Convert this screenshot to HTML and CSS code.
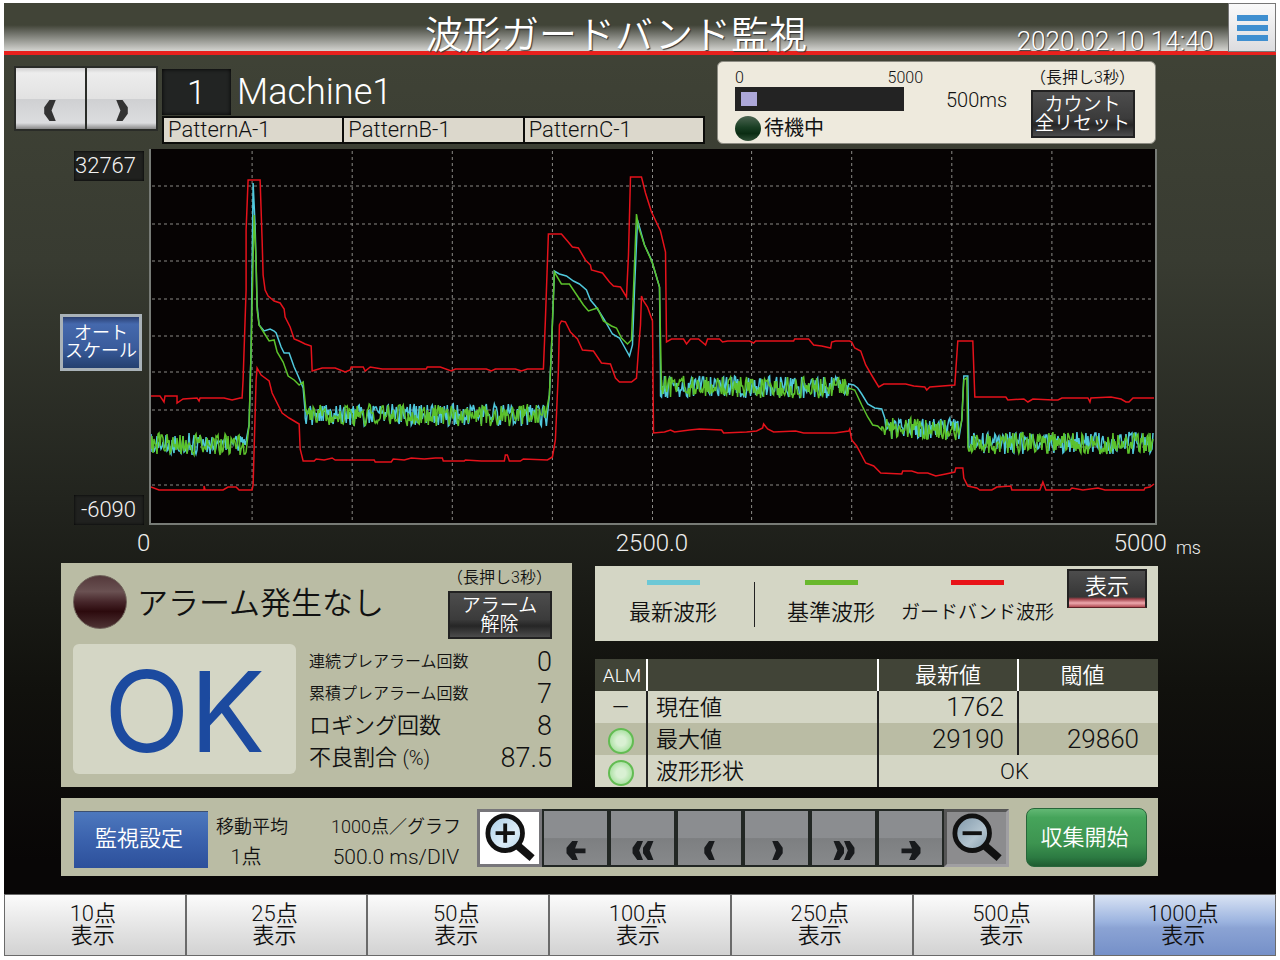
FILE: index.html
```
<!DOCTYPE html>
<html lang="ja">
<head>
  <meta charset="UTF-8"/>
  <meta content="width=device-width, initial-scale=1" name="viewport"/>
  <title>波形ガードバンド監視</title>
  <link rel="stylesheet" href="styles.css">
</head>
<body>
  <!-- shared icons -->
  <svg class="sprite" width="0" height="0">
    <symbol id="left" viewBox="0 0 12 20"><path d="M5 0H11L7 10L11 20H5L0 13V7Z"/></symbol>
    <symbol id="right" viewBox="0 0 12 20"><path d="M7 0H1L5 10L1 20H7L12 13V7Z"/></symbol>
    <symbol id="left2" viewBox="0 0 24 20"><path d="M6 0H12L8 10L12 20H6L1 13V7Z M17 0H23L19 10L23 20H17L12 13V7Z"/></symbol>
    <symbol id="right2" viewBox="0 0 24 20"><path d="M7 0H1L5 10L1 20H7L12 13V7Z M18 0H12L16 10L12 20H18L23 13V7Z"/></symbol>
    <symbol id="first" viewBox="0 0 20 20"><path d="M6 0H12L9 8H20V13H9L12 20H6L0 13V7Z"/></symbol>
    <symbol id="last" viewBox="0 0 20 20"><path d="M14 0H8L11 8H0V13H11L8 20H14L20 13V7Z"/></symbol>
  </svg>

  <div class="screen">
    <header class="header">
      <div class="header-bar">
        <h1>波形ガードバンド監視</h1>
        <time datetime="2020-02-10T14:40">2020.02.10 14:40</time>
      </div>
      <button class="menu" type="button" aria-label="メニュー"><span></span><span></span><span></span></button>
    </header>

    <section class="top">
      <div class="pager">
        <button type="button" aria-label="前へ"><svg><use href="#left"/></svg></button>
        <button type="button" aria-label="次へ"><svg><use href="#right"/></svg></button>
      </div>
      <div class="machine">
        <div class="machine-name"><span class="machine-no">1</span><h2>Machine1</h2></div>
        <div class="patterns"><span>PatternA-1</span><span>PatternB-1</span><span>PatternC-1</span></div>
      </div>
      <div class="status">
        <div class="count">
          <div class="count-scale"><span>0</span><span>5000</span></div>
          <progress value="500" max="5000" aria-label="経過時間"></progress>
          <div class="state"><i class="lamp lamp-green"></i>待機中</div>
        </div>
        <span class="count-value">500ms</span>
        <div class="hold">
          <span>（長押し3秒）</span>
          <button class="dark" type="button">カウント<br>全リセット</button>
        </div>
      </div>
    </section>

    <section class="graph">
      <div class="graph-side">
        <span class="limit">32767</span>
        <button class="autoscale" type="button">オート<br>スケール</button>
        <span class="limit">-6090</span>
      </div>
      <svg class="plot" viewBox="152 149 1003 374" preserveAspectRatio="none">
        <path class="grid" d="M253 151V523M353 151V523M453 151V523M553 151V523M653 151V523M752 151V523M852 151V523M952 151V523M1052 151V523"/>
        <path class="grid" d="M153 186H1153M153 224H1153M153 261H1153M153 299H1153M153 336H1153M153 372H1153M153 410H1153M153 447H1153M153 485H1153"/>
        <polyline class="band" points="152,396 161,396 165,402 166,396 178,396 178,403 184,399 198,398 200,401 201,398 225,398 233,400 241,398 243,398 244,380 247,290 247,230 249,180 261,180 263,240 264,275 266,290 269,296 275,301 281,303 285,309 286,317 291,327 295,339 300,341 306,344 312,346 313,371 323,368 336,368 346,372 351,370 352,367 364,367 366,371 371,367 383,369 427,369 428,367 441,367 452,371 456,369 487,369 492,371 496,369 516,369 522,371 528,369 544,369 546,320 549,234 562,234 568,241 573,247 579,248 586,260 591,265 592,270 603,273 610,282 614,286 621,287 627,297 629,255 631,177 642,177 646,193 652,212 661,231 666,252 667,342 672,339 684,339 687,344 691,339 699,339 706,345 708,339 720,339 723,342 728,341 750,341 754,343 756,341 794,341 795,339 809,339 814,345 822,346 831,348 832,342 836,341 850,341 852,342 855,348 861,351 866,365 873,377 879,387 884,384 906,384 914,386 925,387 927,390 930,387 955,385 958,341 973,341 975,397 1006,397 1008,400 1024,399 1028,402 1033,399 1053,400 1058,400 1062,398 1088,398 1090,402 1091,398 1111,397 1121,399 1126,402 1129,402 1133,398 1154,398"/>
        <polyline class="band" points="152,487 160,490 205,490 205,486 206,490 224,490 229,487 237,487 240,490 253,490 254,485 257,380 258,368 262,375 270,381 273,393 283,413 290,418 300,424 301,449 304,461 315,461 317,459 325,460 333,458 336,460 375,460 376,462 392,462 394,459 405,460 412,458 425,459 436,458 443,458 444,461 465,461 466,460 482,461 505,461 506,455 508,455 510,461 521,461 524,459 548,460 553,457 556,440 559,370 560,325 562,321 566,322 571,332 578,339 583,350 594,351 602,363 611,364 616,378 620,382 632,382 637,378 639,350 641,325 642,296 644,301 648,307 653,321 654,433 665,432 671,430 675,432 690,430 700,429 722,430 724,433 747,432 757,431 763,428 764,424 768,429 774,432 796,431 804,433 835,433 849,431 850,429 852,440 857,446 866,463 874,466 881,473 902,474 903,471 912,471 918,473 928,473 936,476 946,474 955,472 956,468 963,468 964,478 968,486 977,488 980,490 992,490 997,487 1011,486 1012,490 1040,490 1043,482 1046,490 1070,490 1072,488 1083,490 1098,488 1105,490 1120,490 1144,490 1145,488 1150,487 1154,484"/>
        <polyline class="latest" id="latest"/>
        <polyline class="base" id="base"/>
      </svg>
    </section>

    <div class="axis">
      <div class="axis-scale"><span>0</span><span>2500.0</span><span>5000</span></div>
      <span class="unit">ms</span>
    </div>

    <section class="panels">
      <div class="alarm">
        <div class="alarm-head">
          <i class="lamp lamp-red"></i>
          <h3>アラーム発生なし</h3>
          <div class="hold">
            <span>（長押し3秒）</span>
            <button class="dark" type="button">アラーム<br>解除</button>
          </div>
        </div>
        <div class="alarm-body">
          <div class="result">OK</div>
          <dl class="counts">
            <dt class="small">連続プレアラーム回数</dt><dd>0</dd>
            <dt class="small">累積プレアラーム回数</dt><dd>7</dd>
            <dt>ロギング回数</dt><dd>8</dd>
            <dt>不良割合 <small>(%)</small></dt><dd>87.5</dd>
          </dl>
        </div>
      </div>

      <div class="side">
        <div class="legend">
          <span class="key key-latest">最新波形</span>
          <span class="rule"></span>
          <span class="key key-base">基準波形</span>
          <span class="key key-band">ガードバンド波形</span>
          <button class="dark show" type="button">表示</button>
        </div>
        <table class="values">
          <colgroup><col class="c-alm"><col><col class="c-val"><col class="c-val"></colgroup>
          <thead>
            <tr><th>ALM</th><th></th><th>最新値</th><th>閾値</th></tr>
          </thead>
          <tbody>
            <tr><td class="mark">―</td><td>現在値</td><td class="num">1762</td><td></td></tr>
            <tr class="alt"><td class="mark"><i class="lamp lamp-on"></i></td><td>最大値</td><td class="num">29190</td><td class="num wide">29860</td></tr>
            <tr><td class="mark"><i class="lamp lamp-on"></i></td><td>波形形状</td><td class="shape" colspan="2">OK</td></tr>
          </tbody>
        </table>
      </div>
    </section>

    <section class="controls">
      <button class="setting" type="button">監視設定</button>
      <div class="info average"><span>移動平均</span><b>1点</b></div>
      <div class="info division"><span>1000点／グラフ</span><b>500.0 ms/DIV</b></div>
      <div class="tools">
        <button class="zoom zoom-in" type="button" aria-label="拡大">
          <svg viewBox="0 0 52 52">
            <defs><linearGradient id="lens" x1="0" y1="0" x2="1" y2="1"><stop offset="0" stop-color="#a9cde8"/><stop offset=".6" stop-color="#dcecf7"/><stop offset="1" stop-color="#b5d3e6"/></linearGradient></defs>
            <path d="M33 33L49 47" stroke="#111" stroke-width="8"/>
            <circle cx="21" cy="21" r="18" fill="url(#lens)" stroke="#111" stroke-width="5"/>
            <path d="M11 21H31M21 11V31" stroke="#111" stroke-width="4"/>
          </svg>
        </button>
        <button type="button" aria-label="先頭"><svg class="w20"><use href="#first"/></svg></button>
        <button type="button" aria-label="早戻し"><svg class="w24"><use href="#left2"/></svg></button>
        <button type="button" aria-label="戻る"><svg><use href="#left"/></svg></button>
        <button type="button" aria-label="進む"><svg><use href="#right"/></svg></button>
        <button type="button" aria-label="早送り"><svg class="w24"><use href="#right2"/></svg></button>
        <button type="button" aria-label="末尾"><svg class="w20"><use href="#last"/></svg></button>
        <button class="zoom zoom-out" type="button" aria-label="縮小">
          <svg viewBox="0 0 52 52">
            <defs><linearGradient id="lens2" x1="0" y1="0" x2="1" y2="1"><stop offset="0" stop-color="#7d95a8"/><stop offset=".6" stop-color="#b3c4cf"/><stop offset="1" stop-color="#7f98a8"/></linearGradient></defs>
            <path d="M33 33L49 47" stroke="#111" stroke-width="8"/>
            <circle cx="21" cy="21" r="18" fill="url(#lens2)" stroke="#111" stroke-width="5"/>
            <path d="M11 21H31" stroke="#111" stroke-width="4"/>
          </svg>
        </button>
      </div>
      <button class="start" type="button">収集開始</button>
    </section>

    <nav class="tabs">
      <button type="button">10点<br>表示</button>
      <button type="button">25点<br>表示</button>
      <button type="button">50点<br>表示</button>
      <button type="button">100点<br>表示</button>
      <button type="button">250点<br>表示</button>
      <button type="button">500点<br>表示</button>
      <button type="button" class="active">1000点<br>表示</button>
    </nav>
  </div>

  <script src="chart.js"></script>
</body>
</html>
```
FILE: styles.css
```
* {
  box-sizing: border-box;
}
body {
  margin: 0;
  padding: 3px 4px;
  background: #fff;
  color: #111;
  font-family: Roboto, "Noto Sans CJK JP", sans-serif;
  font-weight: 350;
}
h1, h2, h3, dl, dd {
  margin: 0;
  font-weight: 350;
}
button {
  padding: 0;
  border: 0;
  font: inherit;
  color: inherit;
  cursor: pointer;
}
svg {
  display: block;
}
.sprite {
  position: absolute;
}
.screen {
  background: linear-gradient(#414437, #383b31 27%, #22241e 52%, #11110d 72%, #080606 90%);
}

/* header */
.header {
  display: flex;
  height: 52px;
  border-bottom: 4px solid #e8211d;
  background: linear-gradient(#414437 46%, #6c6e66 62%, #d4d4d0);
}
.header-bar {
  flex: 1;
  display: grid;
  grid-template-columns: 1fr auto 1fr;
  color: #fff;
  text-shadow: 1px 1px 1px #333;
}
.header h1 {
  grid-column: 2;
  font-size: 38px;
  line-height: 64px;
}
.header time {
  justify-self: end;
  margin-right: 14px;
  padding-top: 24px;
  font-size: 26px;
  line-height: 28px;
  white-space: nowrap;
}
.menu {
  width: 48px;
  height: 49px;
  display: flex;
  flex-direction: column;
  justify-content: center;
  align-items: center;
  gap: 4px;
  border: 1px solid #777;
  background: linear-gradient(#fafafa, #dcdcdf);
}
.menu span {
  width: 31px;
  height: 6px;
  background: #3f8fd0;
}

/* machine and status */
.top {
  display: flex;
  align-items: flex-start;
  padding: 6px 120px 5px 10px;
}
.pager {
  display: flex;
  margin-top: 5px;
  border: 2px solid #2a2c28;
}
.pager button {
  width: 69px;
  height: 61px;
  padding-top: 20px;
  background: linear-gradient(#d0d0d0, #ededed 8%, #e2e2e2 50%, #cfd0d2 51%, #dcdddf 90%, #888);
  fill: #333;
}
.pager button + button {
  width: 71px;
  border-left: 2px solid #2a2c28;
}
.pager svg {
  width: 13px;
  height: 21px;
  margin: 4px auto 0;
}
.machine {
  flex: none;
  width: 543px;
  margin: 7px 12px 0 4px;
}
.machine-name {
  display: flex;
  align-items: center;
  gap: 6px;
  height: 48px;
  color: #fff;
}
.machine-no {
  width: 69px;
  height: 46px;
  font-size: 34px;
  line-height: 46px;
  text-align: center;
  background: #222423;
  box-shadow: inset 0 0 4px #000;
}
.machine h2 {
  font-size: 36px;
  line-height: 46px;
}
.patterns {
  display: flex;
  border: 2px solid #0c0c0a;
  background: #dcd8cc;
}
.patterns span {
  flex: 1;
  padding-left: 4px;
  font-size: 22px;
  line-height: 24px;
}
.patterns span + span {
  border-left: 2px solid #0c0c0a;
}
.status {
  flex: 1;
  display: flex;
  justify-content: space-between;
  height: 83px;
  padding: 6px 20px 0 17px;
  border: 1px solid #8c8b82;
  border-radius: 6px;
  background: #eeeadd;
}
.count-scale {
  display: flex;
  justify-content: space-between;
  width: 188px;
  font-size: 16px;
  line-height: 19px;
}
progress {
  display: block;
  appearance: none;
  width: 169px;
  height: 24px;
  padding: 5px 6px;
  background: #232323;
}
progress::-webkit-progress-bar {
  background: #232323;
}
progress::-webkit-progress-value {
  background: #aca7d8;
}
.state {
  display: flex;
  align-items: center;
  gap: 3px;
  margin-top: 4px;
  font-size: 20px;
  font-weight: 400;
  line-height: 26px;
}
.count-value {
  padding-top: 20px;
  font-size: 20px;
  line-height: 24px;
}
.hold {
  display: flex;
  flex-direction: column;
  align-items: center;
  font-size: 16px;
  line-height: 19px;
}
.dark {
  width: 104px;
  height: 48px;
  margin-top: 3px;
  border: 2px solid #222;
  color: #fff;
  font-size: 19px;
  line-height: 19px;
  background: linear-gradient(#4d4d4d, #3b3b3b 60%, #262626 75%, #4c4c4c);
}
.lamp {
  display: inline-block;
  flex: none;
  border-radius: 50%;
}
.lamp-green {
  width: 26px;
  height: 25px;
  background: linear-gradient(#4d6552, #1a3f24 45%, #0a2c12 70%, #2f4f36);
}
.lamp-red {
  width: 54px;
  height: 54px;
  border: 1px solid #6d6058;
  background: linear-gradient(#54393b, #6a5152 30%, #46262a 50%, #2c0a0d 68%, #4e3334);
}
.lamp-on {
  width: 26px;
  height: 26px;
  border: 2px solid #62bc52;
  background: radial-gradient(#d9f0d3 30%, #8fd886);
}

/* graph */
.graph {
  display: grid;
  grid-template-columns: 83px 1fr;
  gap: 5px;
  padding: 0 119px 0 57px;
}
.graph-side {
  display: flex;
  flex-direction: column;
  justify-content: space-between;
  align-items: flex-end;
  padding-top: 2px;
}
.limit {
  width: 70px;
  padding-right: 8px;
  color: #f2f2f2;
  font-size: 22px;
  line-height: 30px;
  text-align: right;
  background: #20211f;
  box-shadow: inset 0 0 3px #000;
}
.autoscale {
  width: 82px;
  height: 57px;
  margin: 8px 2px 0 0;
  border: 3px solid #a9b2b8;
  color: #fff;
  font-size: 18px;
  line-height: 18px;
  background: linear-gradient(#2a3f72, #4569ad 14%, #3a5c9c 60%, #24406f);
}
.plot {
  width: 100%;
  height: 376px;
  border: 2px solid #777b76;
  border-top: 0;
  background: #060303;
}
.plot path, .plot polyline {
  fill: none;
  stroke-width: 1;
  vector-effect: non-scaling-stroke;
}
.plot .grid {
  stroke: #8a8a86;
  stroke-dasharray: 3 3;
}
.plot .band {
  stroke: #e5121b;
  stroke-width: 1.5;
}
.plot .latest {
  stroke: #50c8dc;
  stroke-width: 1.5;
}
.plot .base {
  stroke: #5cc22c;
  stroke-width: 1.5;
}
.axis {
  display: flex;
  align-items: flex-end;
  gap: 9px;
  height: 38px;
  padding: 0 75px 5px 133px;
  color: #eee;
  font-size: 24px;
  line-height: 30px;
}
.axis-scale {
  flex: 1;
  display: grid;
  grid-template-columns: 1fr auto 1fr;
}
.axis-scale span:last-child {
  text-align: right;
}
.unit {
  font-size: 18px;
  line-height: 20px;
}

/* alarm, legend, values */
.panels {
  display: grid;
  grid-template-columns: 511fr 563fr;
  gap: 23px;
  padding: 0 118px 0 57px;
}
.alarm {
  height: 224px;
  padding: 5px 20px 0 12px;
  background: #babca4;
}
.alarm-head {
  display: flex;
  align-items: flex-start;
  height: 76px;
}
.alarm-head .lamp {
  margin-top: 7px;
}
.alarm-head h3 {
  flex: 1;
  padding-left: 10px;
  font-size: 31px;
  line-height: 72px;
}
.alarm-head .dark {
  margin-top: 4px;
}
.alarm-body {
  display: flex;
  gap: 13px;
}
.result {
  flex: none;
  width: 223px;
  height: 130px;
  border-radius: 6px;
  color: #1c4a9f;
  background: #d4d6c5;
  font-family: Inter, sans-serif;
  font-size: 112px;
  font-weight: 400;
  line-height: 134px;
  text-align: center;
}
.counts {
  flex: 1;
  display: grid;
  grid-template-columns: 1fr auto;
  grid-auto-rows: 32px;
  align-items: center;
  padding-top: 2px;
  font-size: 22px;
  line-height: 32px;
}
.counts .small {
  font-size: 16px;
}
.counts small {
  font-size: 20px;
}
.counts dd {
  font-size: 27px;
  text-align: right;
}
.side {
  display: flex;
  flex-direction: column;
  justify-content: space-between;
  padding-top: 3px;
}
.legend {
  display: flex;
  align-items: flex-start;
  height: 75px;
  padding: 3px 11px 0 34px;
  background: #d4d6c5;
}
.key {
  display: flex;
  flex-direction: column;
  align-items: center;
  gap: 12px;
  margin-top: 11px;
  font-size: 22px;
  line-height: 32px;
  white-space: nowrap;
}
.key::before {
  content: "";
  width: 53px;
  height: 5px;
  background: #6cc8d6;
}
.key-base::before {
  background: #69b82d;
}
.key-band::before {
  background: #e81318;
}
.key-band {
  margin-left: 26px;
  font-size: 19px;
}
.rule {
  width: 1px;
  height: 45px;
  margin: 13px 32px 0 37px;
  background: #222;
}
.show {
  width: 80px;
  height: 39px;
  margin: 0 0 0 auto;
  padding-bottom: 4px;
  border-bottom: 1px solid #5c2226;
  font-size: 22px;
  line-height: 28px;
  background: linear-gradient(#4d4d4d, #353535 26px, #a04048 28px, #eda9ae 32px, #b04a52);
}
.values {
  width: 100%;
  table-layout: fixed;
  border-collapse: collapse;
  background: #d4d6c5;
  font-size: 22px;
  line-height: 31px;
}
.c-alm {
  width: 52px;
}
.c-val {
  width: 140px;
}
.values th {
  height: 32px;
  padding: 0;
  color: #fff;
  background: #414437;
  font-weight: 350;
}
.values th:first-child {
  padding-left: 3px;
  font-size: 19px;
}
.values th:last-child {
  padding-right: 12px;
}
.values td {
  height: 32px;
  padding: 0 0 0 8px;
}
.values th + th {
  border-left: 2px solid #fff;
}
.values td + td {
  border-left: 2px solid #222;
}
.values .alt {
  background: #babca4;
}
.values .mark {
  padding: 0;
  text-align: center;
}
.values .lamp {
  display: block;
  margin: 3px auto 0;
}
.values .num {
  padding-right: 13px;
  font-size: 26px;
  text-align: right;
}
.values .wide {
  padding-right: 19px;
}
.values .shape {
  padding: 0 8px 0 0;
  text-align: center;
}

/* controls */
.controls {
  display: flex;
  align-items: center;
  height: 78px;
  margin: 11px 118px 18px 57px;
  padding: 0 11px 0 13px;
  background: #babca4;
}
.setting {
  width: 134px;
  height: 57px;
  margin: 4px 8px 0 0;
  padding: 0 4px 8px 0;
  border-top: 1px solid #3c4f70;
  color: #fff;
  font-size: 22px;
  background: linear-gradient(#4d78bd, #3b62ad 50%, #2d509b);
}
.info {
  display: flex;
  flex-direction: column;
  padding-top: 9px;
  font-size: 18px;
  line-height: 30px;
}
.info b {
  font-size: 20px;
  font-weight: 350;
  text-align: center;
}
.average {
  margin-right: 43px;
}
.average b {
  padding-right: 12px;
}
.division {
  white-space: nowrap;
}
.division b {
  font-size: 21px;
}
.tools {
  display: flex;
  flex: none;
  margin: 2px 0 0 auto;
}
.tools button {
  width: 67px;
  height: 58px;
  padding-top: 18px;
  border: 2px solid #222724;
  background: linear-gradient(#8b8d90 50%, #7d7f81 51%, #87898b);
  fill: #181a1c;
}
.tools button svg {
  width: 12px;
  height: 19px;
  margin: 6px auto 0;
}
.tools button .w20 {
  width: 20px;
}
.tools button .w24 {
  width: 24px;
}
.tools .zoom {
  width: 65px;
  padding: 0;
  border: 3px solid #77767a;
  background: #fff;
}
.tools .zoom-out {
  border-color: #555 #a09fa2 #a09fa2 #555;
  background: #8c8c8e;
}
.tools .zoom svg {
  width: 52px;
  height: 50px;
  margin: 0 auto;
}
.start {
  width: 121px;
  height: 59px;
  margin-left: 17px;
  padding: 0 4px 4px 0;
  border-radius: 8px;
  border: 1px solid #28663a;
  color: #fff;
  font-size: 22px;
  background: linear-gradient(#62b874, #46a45b 15%, #3d9450 60%, #2c7a42 85%, #1f5c30);
}

/* display count tabs */
.tabs {
  display: flex;
  border: 1px solid #6a6a6a;
}
.tabs button {
  flex: 1;
  height: 60px;
  padding-right: 4px;
  font-size: 22px;
  line-height: 22px;
  background: linear-gradient(#fbfbfb, #e6e6e6 50%, #d2d2d2);
}
.tabs button + button {
  border-left: 2px solid #6a6a6a;
}
.tabs .active {
  background: linear-gradient(#d9e3f4, #9bb3df 45%, #8ba3d4 55%, #7590c8);
}
```
FILE: chart.js
```
// number = noisy level held until that x, pair = plain point
var latest = [
  { to: 248, y: 444 },
  [250, 425], [252, 350], [254, 183], [256, 225], [258, 305], [260, 325], [265, 331], [271, 329], [275, 331], [277, 333],
  [282, 347], [285, 353], [290, 353], [295, 367], [299, 376], [304, 388], [306, 412],
  { to: 548, y: 415 },
  [550, 395], [552, 350], [555, 271], [560, 274], [567, 276], [574, 281], [580, 284], [587, 290], [591, 300], [596, 306],
  [600, 312], [605, 320], [613, 334], [620, 338], [625, 347], [630, 356], [633, 345], [635, 290], [638, 220], [645, 245],
  [652, 260], [660, 287], [661, 380],
  { to: 850, y: 387 },
  [854, 385], [858, 388], [862, 394], [868, 404], [875, 408], [882, 409], [885, 418],
  { to: 960, y: 429 },
  [962, 420], [964, 376], [968, 376], [969, 440],
  { to: 1154, y: 443 }
];
var base = [
  { to: 248, y: 444 },
  [250, 425], [252, 350], [255, 215], [257, 260], [258, 310], [260, 325], [265, 333], [270, 341], [275, 340], [278, 352],
  [284, 362], [289, 376], [295, 380], [300, 385], [304, 382], [307, 412],
  { to: 548, y: 415 },
  [550, 395], [552, 350], [555, 272], [562, 284], [570, 284], [578, 296], [584, 305], [589, 311], [598, 308], [604, 321],
  [612, 326], [617, 328], [622, 338], [628, 344], [632, 340], [634, 290], [637, 214], [639, 227], [645, 245], [653, 263],
  [660, 287], [662, 390],
  { to: 850, y: 387 },
  [855, 390], [862, 405], [868, 417], [873, 425], [878, 426], [882, 430],
  { to: 960, y: 429 },
  [962, 420], [964, 380], [967, 378], [968, 440],
  { to: 1154, y: 443 }
];

function draw(id, trace, seed) {
  var x = 152;
  var points = [];

  function random() {
    seed = (seed * 16807) % 2147483647;
    return seed / 2147483647;
  }

  trace.forEach(function (step) {
    if (Array.isArray(step)) {
      x = step[0];
      points.push(step.join(","));
      return;
    }
    for (; x < step.to; x += 1) {
      points.push(x + "," + Math.round(step.y + (random() - 0.5) * 22));
    }
  });
  document.getElementById(id).setAttribute("points", points.join(" "));
}

draw("latest", latest, 4127);
draw("base", base, 90211);
```
